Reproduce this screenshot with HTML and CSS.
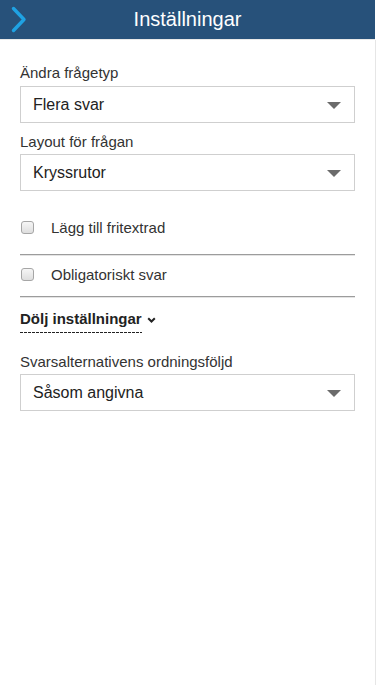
FILE: index.html
```
<!DOCTYPE html>
<html>
<head>
  <meta charset="utf-8">
  <title>Inställningar</title>
  <link rel="stylesheet" href="styles.css">
</head>
<body>
  <div class="header">
    <svg class="back" width="30" height="39" viewBox="0 0 30 39">
      <polyline points="13.5,8.5 24,19.5 13.5,30.5" fill="none" stroke="#1fa2e3" stroke-width="3.4" stroke-linecap="round" stroke-linejoin="round"/>
    </svg>
    <h1 class="title">Inställningar</h1>
    <span></span>
  </div>

  <div class="content">
    <p class="label first">Ändra frågetyp</p>
    <div class="select"><span>Flera svar</span><i class="arrow"></i></div>

    <p class="label">Layout för frågan</p>
    <div class="select"><span>Kryssrutor</span><i class="arrow"></i></div>

    <div class="checkRow firstRow"><span class="box"></span><span>Lägg till fritextrad</span></div>
    <div class="checkRow"><span class="box"></span><span>Obligatoriskt svar</span></div>

    <div class="toggle">
      <span class="toggleText">Dölj inställningar</span>
      <svg width="9" height="6" viewBox="0 0 9 6"><polyline points="1.2,1.2 4.5,4.5 7.8,1.2" fill="none" stroke="#222" stroke-width="2"/></svg>
    </div>

    <p class="label third">Svarsalternativens ordningsföljd</p>
    <div class="select"><span>Såsom angivna</span><i class="arrow"></i></div>
  </div>
</body>
</html>
```
FILE: styles.css
```
html, body {margin: 0; padding: 0; height: 100%;}
body {font-family: "Liberation Sans", Arial, sans-serif; background: #fff; color: #333; width: 376px;}

.header {display: grid; grid-template-columns: 1fr auto 1fr; align-items: center; height: 39px; width: 375px; background: #27517a; border-bottom: 1px solid #e9e9e9;}
.back {display: block;}
.title {margin: 0; font-size: 20px; font-weight: normal; color: #fff; line-height: 39px;}

.content {width: 335px; padding: 0 20px; border-right: 1px solid #e6e6e6; min-height: calc(100% - 40px); box-sizing: content-box; overflow: hidden;}

.label {margin: 10px 0 3px; font-size: 15px; line-height: 18px; color: #333;}
.label.first {margin-top: 24px; margin-bottom: 4px;}
.label.third {margin-top: 20px; margin-bottom: 3px;}

.select {display: flex; align-items: center; justify-content: space-between; height: 35px; border: 1px solid #cfcfcf; padding: 0 13px 0 12px; font-size: 16px; color: #222;}
.arrow {width: 0; height: 0; border-left: 7px solid transparent; border-right: 7px solid transparent; border-top: 7px solid #6b6b6b; margin-top: 1px;}

.checkRow {display: flex; align-items: center; gap: 17px; padding: 11px 0 12px 1px; line-height: 18px; font-size: 15px; color: #333; border-bottom: 1px solid #9c9c9c; box-shadow: 0 1px 0 #e4e4e4;}
.checkRow.firstRow {margin-top: 17px; padding-bottom: 17px;}
.box {width: 11px; height: 11px; border: 1px solid #a6a6a6; border-radius: 3px; background: linear-gradient(#f6f6f6, #dedede); margin-top: -1px;}

.toggle {display: flex; align-items: center; gap: 5px; margin-top: 13px; font-size: 15px; font-weight: bold; color: #222; line-height: 18px;}
.toggleText {padding-bottom: 5px; background: linear-gradient(to right, #222 3px, transparent 3px) repeat-x left bottom / 4px 1px;}
.toggle svg {margin-bottom: 3px;}
```
